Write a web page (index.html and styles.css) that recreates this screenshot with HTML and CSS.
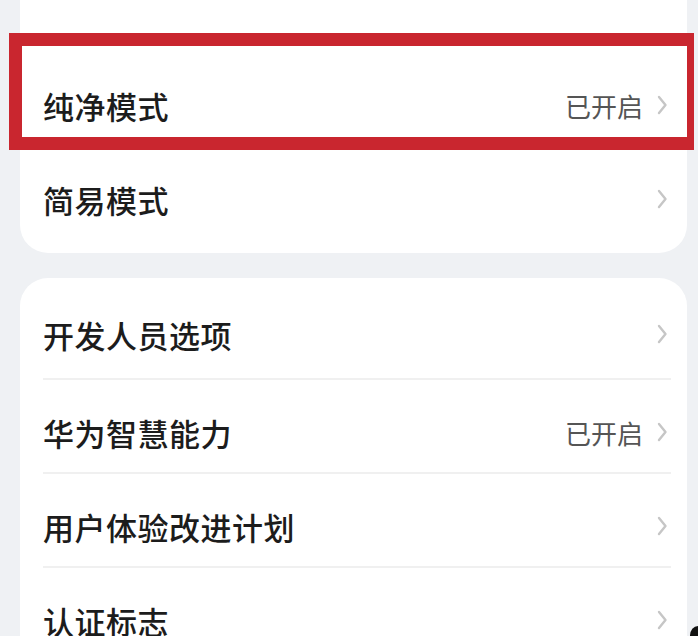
FILE: index.html
```html
<!DOCTYPE html>
<html lang="zh-CN">
<head>
<meta charset="utf-8">
<link rel="stylesheet" href="styles.css">
</head>
<body>
<div class="page">
  <div class="card card-first">
    <div class="row">
      <span class="label">纯净模式</span>
      <span class="right"><span class="value">已开启</span><svg class="chev" viewBox="0 0 12 24"><path d="M3 4 L9.5 12 L3 20"/></svg></span>
    </div>
    <div class="row">
      <span class="label">简易模式</span>
      <span class="right"><svg class="chev" viewBox="0 0 12 24"><path d="M3 4 L9.5 12 L3 20"/></svg></span>
    </div>
  </div>
  <div class="card card-second">
    <div class="row divided">
      <span class="label">开发人员选项</span>
      <span class="right"><svg class="chev" viewBox="0 0 12 24"><path d="M3 4 L9.5 12 L3 20"/></svg></span>
    </div>
    <div class="row divided">
      <span class="label">华为智慧能力</span>
      <span class="right"><span class="value">已开启</span><svg class="chev" viewBox="0 0 12 24"><path d="M3 4 L9.5 12 L3 20"/></svg></span>
    </div>
    <div class="row divided">
      <span class="label">用户体验改进计划</span>
      <span class="right"><svg class="chev" viewBox="0 0 12 24"><path d="M3 4 L9.5 12 L3 20"/></svg></span>
    </div>
    <div class="row">
      <span class="label">认证标志</span>
      <span class="right"><svg class="chev" viewBox="0 0 12 24"><path d="M3 4 L9.5 12 L3 20"/></svg></span>
    </div>
  </div>
  <div class="highlight"></div>
  <div class="corner"></div>
</div>
</body>
</html>
```

FILE: styles.css
```css
html, body {
  margin: 0;
  padding: 0;
}
body {
  background: #eff1f4;
  font-family: "Noto Sans CJK SC", "Noto Sans", sans-serif;
  width: 698px;
  height: 636px;
  overflow: hidden;
}
.page {
  position: relative;
  width: 698px;
  height: 636px;
  display: flex;
  flex-direction: column;
}
.card {
  background: #ffffff;
  margin-left: 20px;
  width: 667px;
  display: flex;
  flex-direction: column;
}
.card-first {
  padding-top: 53px;
  padding-bottom: 12px;
  border-radius: 0 0 28px 28px;
}
.card-second {
  margin-top: 25px;
  padding-top: 6px;
  border-radius: 28px 28px 0 0;
  flex: 1;
}
.card-second .row:first-child {
  padding-top: 4px;
  height: 96px;
}
.row {
  height: 94px;
  box-sizing: border-box;
  padding: 10px 19px 0 23px;
  display: flex;
  align-items: center;
  justify-content: space-between;
  position: relative;
}
.row.divided::after {
  content: "";
  position: absolute;
  left: 23px;
  right: 16px;
  bottom: 0;
  height: 2px;
  background: #f0f0f0;
}
.label {
  font-size: 31px;
  font-weight: 500;
  color: #1c1c1c;
  letter-spacing: 0.5px;
}
.right {
  display: flex;
  align-items: center;
  gap: 13px;
}
.value {
  font-size: 26px;
  color: #555555;
}
.chev {
  width: 12px;
  height: 24px;
  display: block;
}
.chev path {
  fill: none;
  stroke: #c6c6c6;
  stroke-width: 2.4;
  stroke-linecap: round;
  stroke-linejoin: round;
}
.highlight {
  position: absolute;
  left: 9px;
  top: 33px;
  width: 685px;
  height: 117px;
  box-sizing: border-box;
  border-style: solid;
  border-color: #c9262f;
  border-width: 13px 7px 13px 13px;
}
.corner {
  position: absolute;
  right: 0;
  bottom: 0;
  width: 8px;
  height: 10px;
  background: #111;
  border-top-left-radius: 10px 12px;
}
```
